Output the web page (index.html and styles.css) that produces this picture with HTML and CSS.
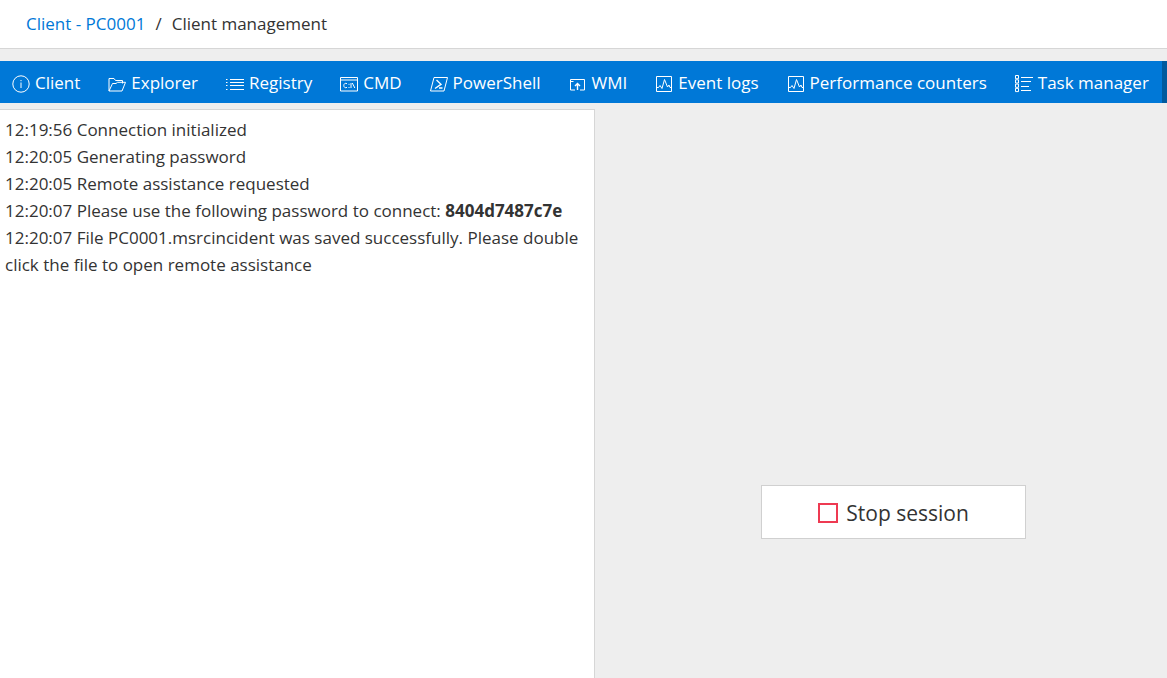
FILE: index.html
```html
<!DOCTYPE html>
<html lang="en">
<head>
  <meta charset="UTF-8" />
  <title>Client management</title>
  <meta name="viewport" content="width=device-width, initial-scale=1.0" />
  <link rel="stylesheet" href="styles.css">
</head>
<body>
  <nav class="breadcrumb">
    <a href="#">Client - PC0001</a>
    <span>/</span>
    <span>Client management</span>
  </nav>

  <div class="toolbar">
    <nav class="tabs">
      <a href="#">
        <svg class="icon" viewBox="0 0 18 18"><circle cx="9" cy="9" r="8.2"/><path d="M9 7.5v5.5M9 5v1.2"/></svg>
        Client
      </a>
      <a href="#">
        <svg class="icon" viewBox="0 0 18 18"><path d="M1 16V3.500h5l1.500 2h7v3M1 16L4.500 8.500H8l1.500-1.200H17.500L14 16z"/></svg>
        Explorer
      </a>
      <a href="#">
        <svg class="icon" viewBox="0 0 18 18"><path d="M4 4.500h14M4 7.500h14M4 10.500h14M4 14.500h14M0 4.500h1.500M0 7.500h1.500M0 10.500h1.500M0 14.500h1.500"/></svg>
        Registry
      </a>
      <a href="#">
        <svg class="icon" viewBox="0 0 18 18"><path d="M.5 2.500h17v13.500H.5zM.5 5h17"/><path d="M7 8.700C5.200 7.700 3.800 8.800 3.800 10.500s1.400 2.800 3.200 1.900M9 8.800v1M9 12v1M11 8v5M12.300 8l2.500 5"/></svg>
        CMD
      </a>
      <a href="#">
        <svg class="icon" viewBox="0 0 18 18"><path d="M4 2.500h13.500L14 16H.5z"/><path class="thick" d="M6.500 5l4.500 4.300-6 4.200M9 13h3.500"/></svg>
        PowerShell
      </a>
      <a href="#">
        <svg class="icon" viewBox="0 0 18 18"><path d="M6 15H1.500V4.500h14V15H11M1.500 6.500h3"/><path class="thick" d="M8.500 15V8.500M6 11l2.500-2.500L11 11"/></svg>
        WMI
      </a>
      <a href="#">
        <svg class="icon" viewBox="0 0 18 18"><path d="M1.500 1.500h15v15h-15z"/><path d="M1.500 12.500h2l1.500-2 2 3 2.500-9 3 7.500 1.500-2 1 2.500h1.500"/></svg>
        Event logs
      </a>
      <a href="#">
        <svg class="icon" viewBox="0 0 18 18"><path d="M1.500 1.500h15v15h-15z"/><path d="M1.500 12.500h2l1.500-2 2 3 2.500-9 3 7.500 1.500-2 1 2.500h1.500"/></svg>
        Performance counters
      </a>
      <a href="#">
        <svg class="icon" viewBox="0 0 18 18"><path d="M.5 .5h3v3.200h-3zM.5 4.800h3v3.200h-3zM.5 9.100h3v3.200h-3zM.5 13.400h3v3.200h-3zM6 2.500h12M6 6.500h10M6 11.500h8M6 15.500h10"/></svg>
        Task manager
      </a>
    </nav>
    <div class="toolbar-end"></div>
  </div>

  <main class="content">
    <div class="log">
      <div>12:19:56 Connection initialized</div>
      <div>12:20:05 Generating password</div>
      <div>12:20:05 Remote assistance requested</div>
      <div>12:20:07 Please use the following password to connect: <b>8404d7487c7e</b></div>
      <div>12:20:07 File PC0001.msrcincident was saved successfully. Please double click the file to open remote assistance</div>
    </div>
    <div class="session">
      <button class="stop-button" type="button">
        <span class="stop-icon"></span>
        Stop session
      </button>
    </div>
  </main>
</body>
</html>
```
FILE: styles.css
```css
* {
  box-sizing: border-box;
}
body {
  margin: 0;
  min-height: 100vh;
  display: flex;
  flex-direction: column;
  background: #eee;
  color: #333;
  font-family: "Segoe UI", "Open Sans", sans-serif;
  font-size: 17px;
  line-height: 27px;
}
a {
  color: #0078d7;
  text-decoration: none;
}

/* breadcrumb */
.breadcrumb {
  display: flex;
  gap: 10px;
  padding: 10px 26px 11px;
  background: #fff;
  border-bottom: 1px solid #d6d6d6;
}

/* toolbar */
.toolbar {
  display: flex;
  margin: 12px 0 6px;
  background: #0078d7;
}
.tabs {
  flex: 1;
  display: flex;
  gap: 28px;
  padding: 0 12px;
  min-width: 0;
  overflow: hidden;
}
.tabs a {
  display: flex;
  align-items: center;
  gap: 5px;
  height: 42px;
  padding-top: 1px;
  color: #fff;
  white-space: nowrap;
}
.tabs a:hover {
  text-decoration: underline;
}
.icon {
  width: 18px;
  height: 18px;
  margin-top: 2px;
  flex-shrink: 0;
  fill: none;
  stroke: #fff;
  stroke-width: 1;
}
.icon .thick {
  stroke-width: 1.4;
}
.toolbar-end {
  width: 5px;
  background: #005a9e;
}

/* content */
.content {
  flex: 1;
  display: flex;
}
.log {
  width: 51%;
  padding: 6px 5px;
  background: #fff;
  border: 1px solid #d6d6d6;
  border-width: 1px 1px 0 0;
}
.session {
  flex: 1;
  display: flex;
  justify-content: center;
  align-items: flex-end;
  padding: 0 0 139px 25px;
}
.stop-button {
  display: flex;
  align-items: center;
  justify-content: center;
  gap: 8px;
  width: 265px;
  height: 54px;
  padding-top: 3px;
  background: #fff;
  border: 1px solid #d0d0d0;
  color: #333;
  font-family: inherit;
  font-size: 21px;
  cursor: pointer;
}
.stop-button:hover {
  background: #f8f8f8;
}
.stop-icon {
  width: 20px;
  height: 20px;
  border: 2px solid #ee3a52;
}
```
